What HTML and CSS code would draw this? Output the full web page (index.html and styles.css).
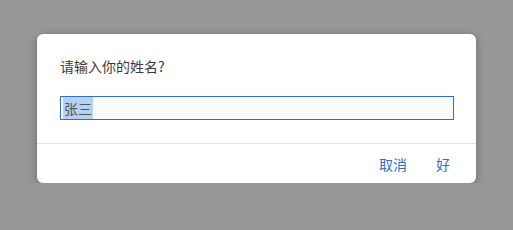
FILE: index.html
```html
<!DOCTYPE html>
<html lang="zh-CN">
<head>
  <meta charset="UTF-8" />
  <meta name="viewport" content="width=device-width, initial-scale=1.0" />
  <title>Prompt</title>
  <link rel="stylesheet" href="styles.css">
</head>
<body>
  <div class="dialog">
    <div class="dialog-body">
      <p class="dialog-title">请输入你的姓名?</p>
      <div class="field"><span class="field-sel">张三</span></div>
    </div>
    <div class="dialog-footer">
      <button class="btn">取消</button>
      <button class="btn">好</button>
    </div>
  </div>
</body>
</html>
```

FILE: styles.css
```css
body {
  margin: 0;
  padding: 34px 0 0 37px;
  background: #979797;
  font-family: "Noto Sans CJK SC", "Liberation Sans", sans-serif;
}
.dialog {
  width: 439px;
  height: 149px;
  background: #fff;
  border-radius: 6px;
  box-shadow: 0 2px 8px rgba(0, 0, 0, 0.3);
  display: flex;
  flex-direction: column;
}
.dialog-body {
  padding: 22px 22px 0 23px;
  height: 87px;
  border-bottom: 1px solid #e3e3e3;
}
.dialog-title {
  margin: 0;
  font-size: 14px;
  line-height: 20px;
  color: #3a3a3a;
}
.field {
  margin-top: 20px;
  height: 22px;
  border: 1px solid #2f6fd0;
  background: #f9fbfc;
  padding-left: 2px;
  display: flex;
  align-items: stretch;
}
.field-sel {
  background: #b7d1f2;
  color: #555;
  font-size: 14px;
  line-height: 22px;
  padding: 0 1px;
}
.dialog-footer {
  flex: 1;
  display: flex;
  justify-content: flex-end;
  align-items: center;
  gap: 5px;
  padding-right: 14px;
}
.btn {
  background: none;
  border: none;
  color: #2f6fd0;
  font-family: inherit;
  font-size: 14px;
  padding: 4px 12px;
  cursor: pointer;
}
```
